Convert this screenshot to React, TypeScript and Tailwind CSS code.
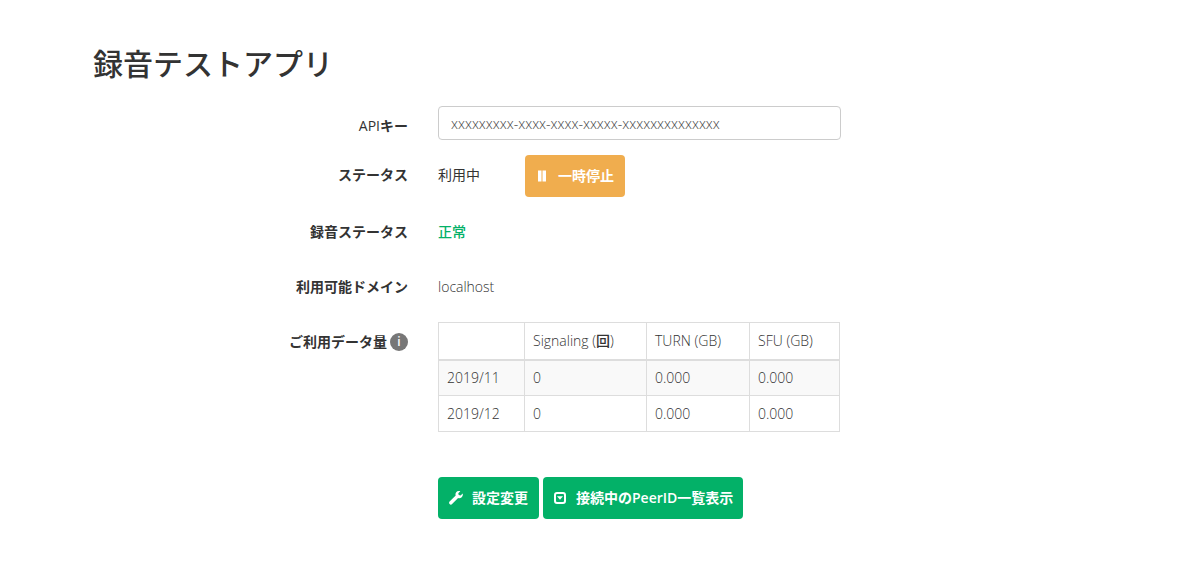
import type { ReactNode } from "react";

const usage = [
  { month: "2019/11", signaling: "0", turn: "0.000", sfu: "0.000" },
  { month: "2019/12", signaling: "0", turn: "0.000", sfu: "0.000" },
];

function PauseIcon() {
  return (
    <svg viewBox="0 0 14 14" className="size-3.5 shrink-0" fill="currentColor" aria-hidden="true">
      <path d="M3 1.500h3.500v11H3zM7.500 1.500H11v11H7.500z" />
    </svg>
  );
}

function WrenchIcon() {
  return (
    <svg viewBox="0 0 14 14" className="size-3.5 shrink-0" fill="currentColor" aria-hidden="true">
      <path d="M13.7 2.5 11.6 4.6 9.7 4.1 9.3 2.3 11.3.2C9.8-.3 8.100.1 7.200 1.200 6.400 2.100 6.300 3.300 6.700 4.400L.6 10.500C-.1 11.200-.1 12.400.6 13.100 1.300 13.800 2.400 13.800 3.100 13.100L9.100 7.100C10.300 7.500 11.700 7.300 12.700 6.300 13.700 5.300 14.100 3.800 13.700 2.500Z" />
    </svg>
  );
}

function ExpandIcon() {
  return (
    <svg viewBox="0 0 14 14" className="size-3.5 shrink-0" aria-hidden="true">
      <rect x="2" y="2" width="10" height="10" rx="2" fill="none" stroke="currentColor" strokeWidth="2" />
      <path d="M4 5.200h6L7 8.800z" fill="currentColor" />
    </svg>
  );
}

function Row({ label, children }: { label: ReactNode; children: ReactNode }) {
  return (
    <div className="grid grid-cols-[1fr_2fr]">
      <div className="px-[15px] pt-2.5 text-right font-bold">{label}</div>
      <div className="min-w-0 px-[15px]">{children}</div>
    </div>
  );
}

export default function App() {
  return (
    <main className="min-h-screen bg-white pt-[47px] pr-[77px] pb-14 pl-[78px] font-['Open_Sans','Noto_Sans_CJK_JP',sans-serif] text-[14px] leading-5 font-light text-[#333]">
      <h1 className="px-[15px] text-[30px] leading-[34px] font-medium">録音テストアプリ</h1>

      <div className="mt-[25px] flex flex-col">
        <Row
          label={
            <label htmlFor="api-key">
              <span className="font-normal">API</span>キー
            </label>
          }
        >
          <input
            id="api-key"
            type="text"
            readOnly
            value="xxxxxxxxx-xxxx-xxxx-xxxxx-xxxxxxxxxxxxxx"
            className="block h-[34px] w-full max-w-[403px] rounded border border-[#ccc] px-3 text-[14px] font-light text-[#444] outline-none"
          />
        </Row>

        <div className="pt-[15px]">
          <Row label="ステータス">
            <div className="flex items-start">
              <span className="w-[87px] pt-2.5 font-normal">利用中</span>
              <button type="button" className="flex h-[42px] items-center gap-[9px] rounded bg-[#f0ad4e] pr-[11px] pl-2.5 font-semibold text-white">
                <PauseIcon />
                一時停止
              </button>
            </div>
          </Row>
        </div>

        <div className="pt-[15px]">
          <Row label="録音ステータス">
            <p className="pt-2.5 font-medium text-[#03b168]">正常</p>
          </Row>
        </div>

        <div className="pt-[25px]">
          <Row label="利用可能ドメイン">
            <p className="pt-2.5">localhost</p>
          </Row>
        </div>

        <div className="pt-[25px]">
          <Row
            label={
              <span className="inline-flex items-center gap-[3px]">
                ご利用データ量
                <span className="inline-flex size-[18px] items-center justify-center rounded-full bg-[#777] text-[12px] leading-none font-semibold text-white">
                  i
                </span>
              </span>
            }
          >
            <table className="w-full max-w-[402px] table-fixed border-collapse text-left">
              <colgroup>
                <col className="w-[86px]" />
                <col className="w-[122px]" />
                <col className="w-[103px]" />
                <col />
              </colgroup>
              <thead>
                <tr className="h-[37px]">
                  <td className="border border-b-2 border-[#ddd] px-2" />
                  <th scope="col" className="border border-b-2 border-[#ddd] px-2 font-light">
                    Signaling (<span className="font-medium">回</span>)
                  </th>
                  <th scope="col" className="border border-b-2 border-[#ddd] px-2 font-light">TURN (GB)</th>
                  <th scope="col" className="border border-b-2 border-[#ddd] px-2 font-light">SFU (GB)</th>
                </tr>
              </thead>
              <tbody>
                {usage.map((row) => (
                  <tr key={row.month} className="h-9 odd:bg-[#f9f9f9]">
                    <td className="border border-[#ddd] px-2">{row.month}</td>
                    <td className="border border-[#ddd] px-2">{row.signaling}</td>
                    <td className="border border-[#ddd] px-2">{row.turn}</td>
                    <td className="border border-[#ddd] px-2">{row.sfu}</td>
                  </tr>
                ))}
              </tbody>
            </table>
          </Row>
        </div>

        <div className="pt-[45px]">
          <Row label={null}>
            <div className="flex gap-1">
              <button type="button" className="flex h-[42px] items-center gap-[9px] rounded bg-[#03b168] px-[11px] font-semibold text-white">
                <WrenchIcon />
                設定変更
              </button>
              <button type="button" className="flex h-[42px] items-center gap-[9px] rounded bg-[#03b168] px-2.5 font-semibold text-white">
                <ExpandIcon />
                接続中のPeerID一覧表示
              </button>
            </div>
          </Row>
        </div>
      </div>
    </main>
  );
}
